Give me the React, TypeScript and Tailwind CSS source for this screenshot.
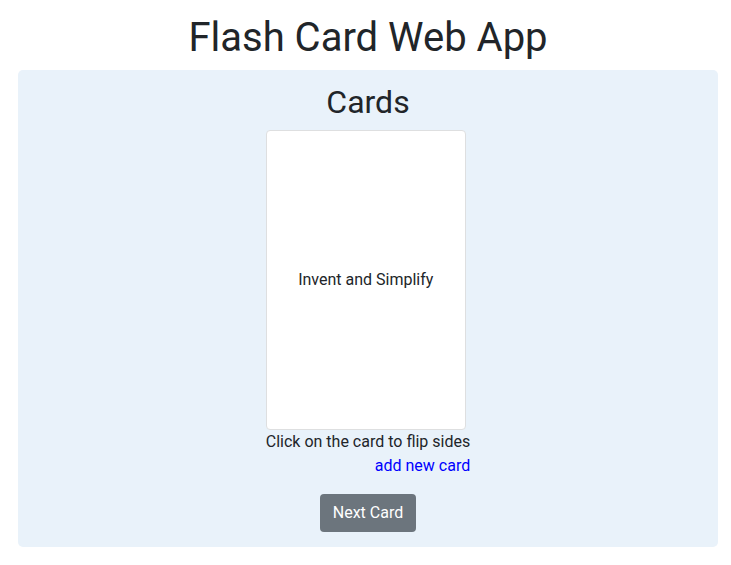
import React, { useState } from "react";

const CARDS = [
  { front: "Invent and Simplify", back: "Leaders expect and require innovation and invention from their teams." },
];

export default function App() {
  const [flipped, setFlipped] = useState(false);
  const [idx, setIdx] = useState(0);
  const card = CARDS[idx % CARDS.length];

  return (
    <div className="min-h-screen bg-white font-['Roboto','Liberation_Sans',sans-serif] text-[#212529]">
      <div className="pl-[18px] pr-[13px] pt-[14px]">
        <h1 className="mb-2 text-center text-[40px] leading-[48px] font-normal">Flash Card Web App</h1>

        <div className="rounded-[5px] bg-[#e9f2fa] pt-[13px] pb-[15px]">
          <h2 className="mb-[9px] text-center text-[32px] leading-[38px] font-normal">Cards</h2>

          <div className="mx-auto flex w-fit flex-col">
            <div
              onClick={() => setFlipped((f) => !f)}
              className="flex h-[300px] w-[200px] cursor-pointer items-center justify-center rounded-[4px] border border-[#dedfe0] bg-white px-3 text-center text-base"
            >
              {flipped ? card.back : card.front}
            </div>
            <p className="text-base leading-6">Click on the card to flip sides</p>
            <a href="#" className="self-end text-base leading-6 text-[#0000ff]">
              add new card
            </a>
          </div>

          <div className="mt-4 flex justify-center">
            <button
              onClick={() => {
                setIdx((i) => i + 1);
                setFlipped(false);
              }}
              className="h-[38px] rounded-[4px] bg-[#6c757d] px-[13px] text-base text-white"
            >
              Next Card
            </button>
          </div>
        </div>
      </div>
    </div>
  );
}
